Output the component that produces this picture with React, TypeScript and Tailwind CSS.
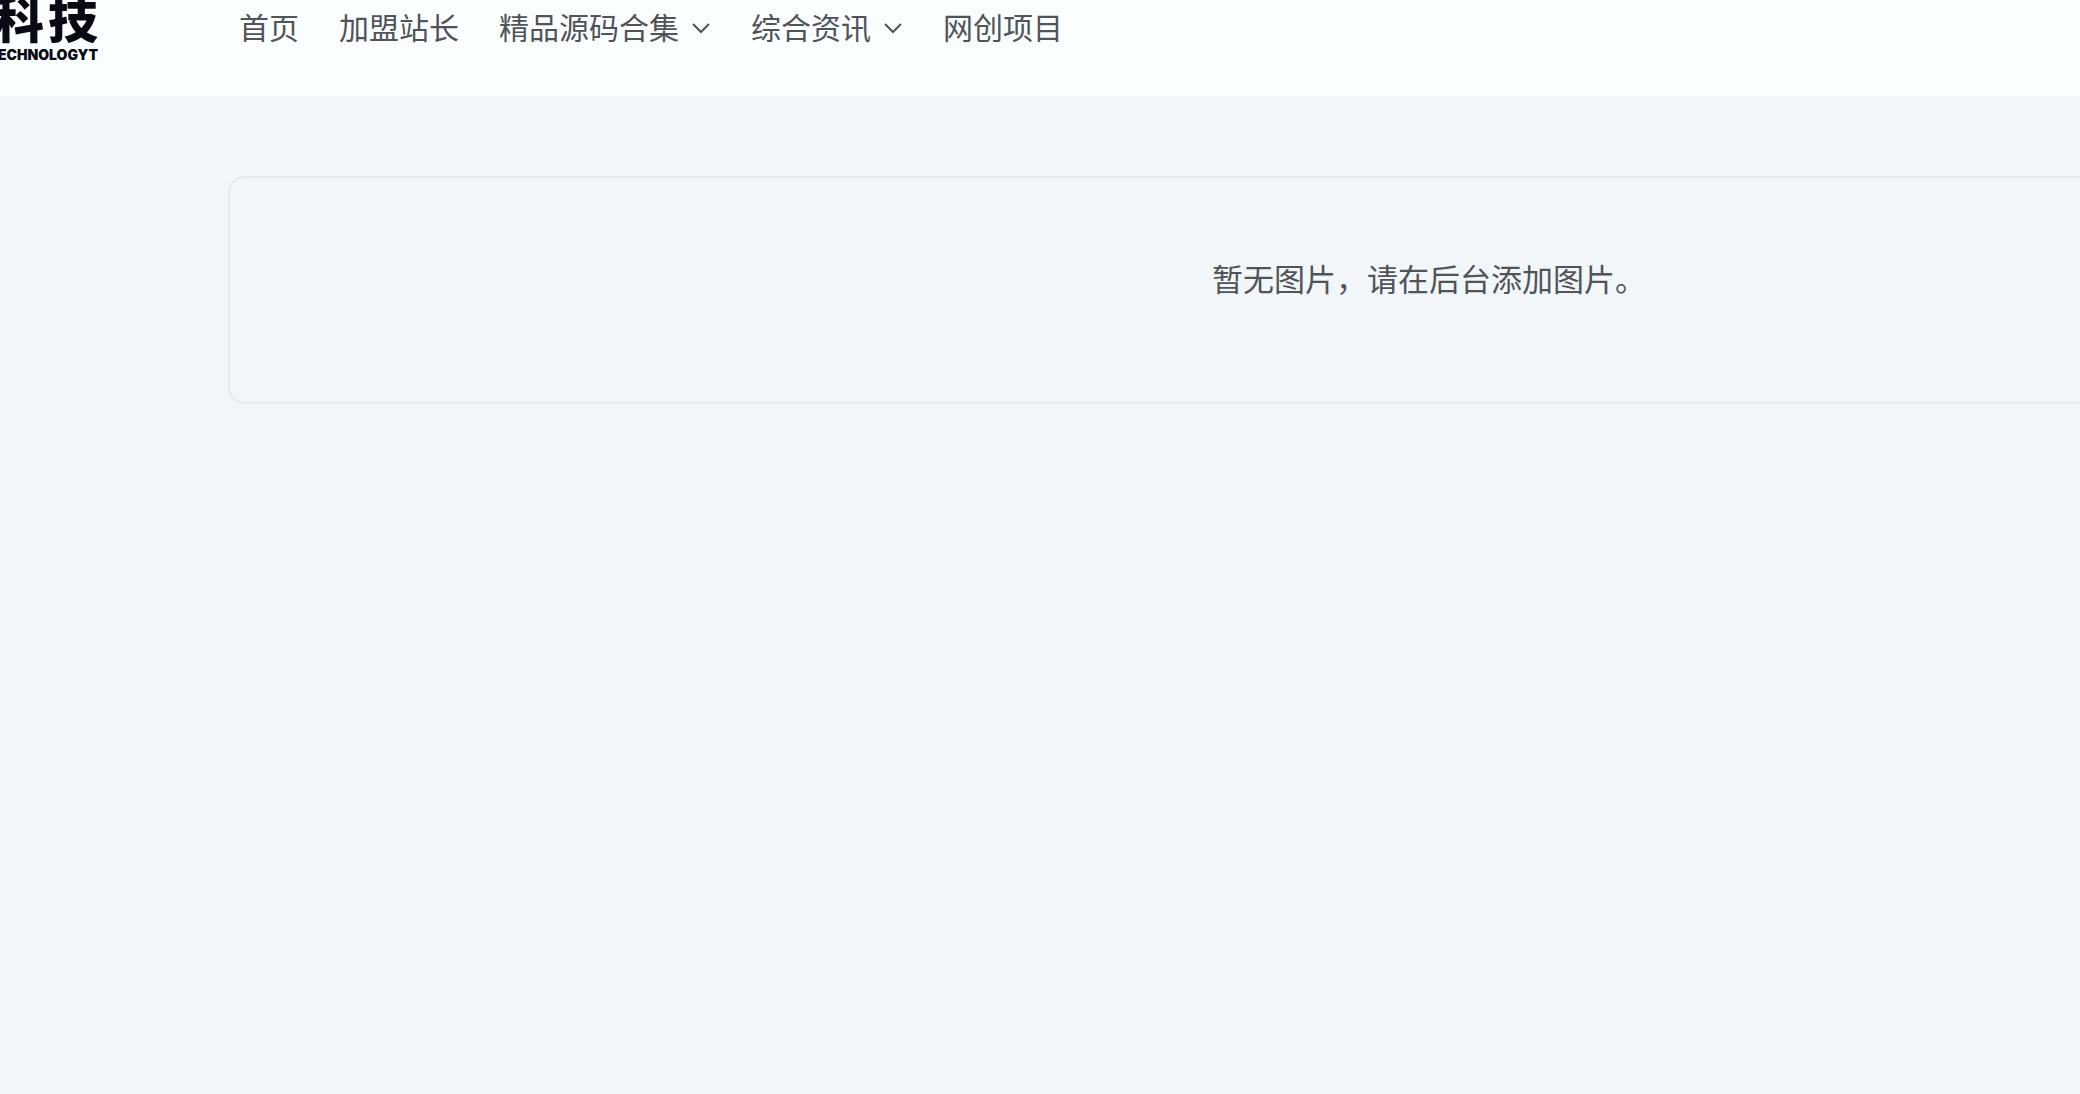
type NavItem = { label: string; hasMenu?: boolean };

const navItems: NavItem[] = [
  { label: "首页" },
  { label: "加盟站长" },
  { label: "精品源码合集", hasMenu: true },
  { label: "综合资讯", hasMenu: true },
  { label: "网创项目" },
];

function Chevron() {
  return (
    <svg className="mt-1 h-5 w-5" viewBox="0 0 20 20" fill="none" stroke="currentColor" strokeWidth="2" aria-hidden="true">
      <path d="M2 6 10 14 18 6" />
    </svg>
  );
}

function Logo() {
  return (
    <a href="#" className="flex h-[65px] w-[98px] flex-col items-end justify-end overflow-hidden text-[#0a0a14]">
      <span className="flex gap-1 text-[50px] leading-[58px] font-black">
        <span>科</span>
        <span>技</span>
      </span>
      <span className="font-['Inter','Liberation_Sans',sans-serif] text-[14px] leading-5 font-black whitespace-nowrap">
        ECHNOLOGYT
      </span>
    </a>
  );
}

export default function App() {
  return (
    <div className="min-h-screen overflow-hidden bg-[#f2f6f9] font-['Noto_Sans_CJK_SC',sans-serif] text-[#505358]">
      <header className="flex h-24 items-start bg-[#fbfeff]">
        <Logo />
        <nav className="ml-[141px] flex h-13 items-center gap-10 text-[30px] leading-10">
          {navItems.map((item) => (
            <a key={item.label} href="#" className="flex items-center gap-3 whitespace-nowrap">
              {item.label}
              {item.hasMenu && <Chevron />}
            </a>
          ))}
        </nav>
      </header>
      <main className="pt-20 pl-[228px]">
        <section className="-mr-[550px] rounded-2xl border-2 border-[#e6eaed] px-8 pt-19 pb-25 text-center">
          <p className="text-[31px] leading-[48px]">暂无图片，请在后台添加图片。</p>
        </section>
      </main>
    </div>
  );
}
